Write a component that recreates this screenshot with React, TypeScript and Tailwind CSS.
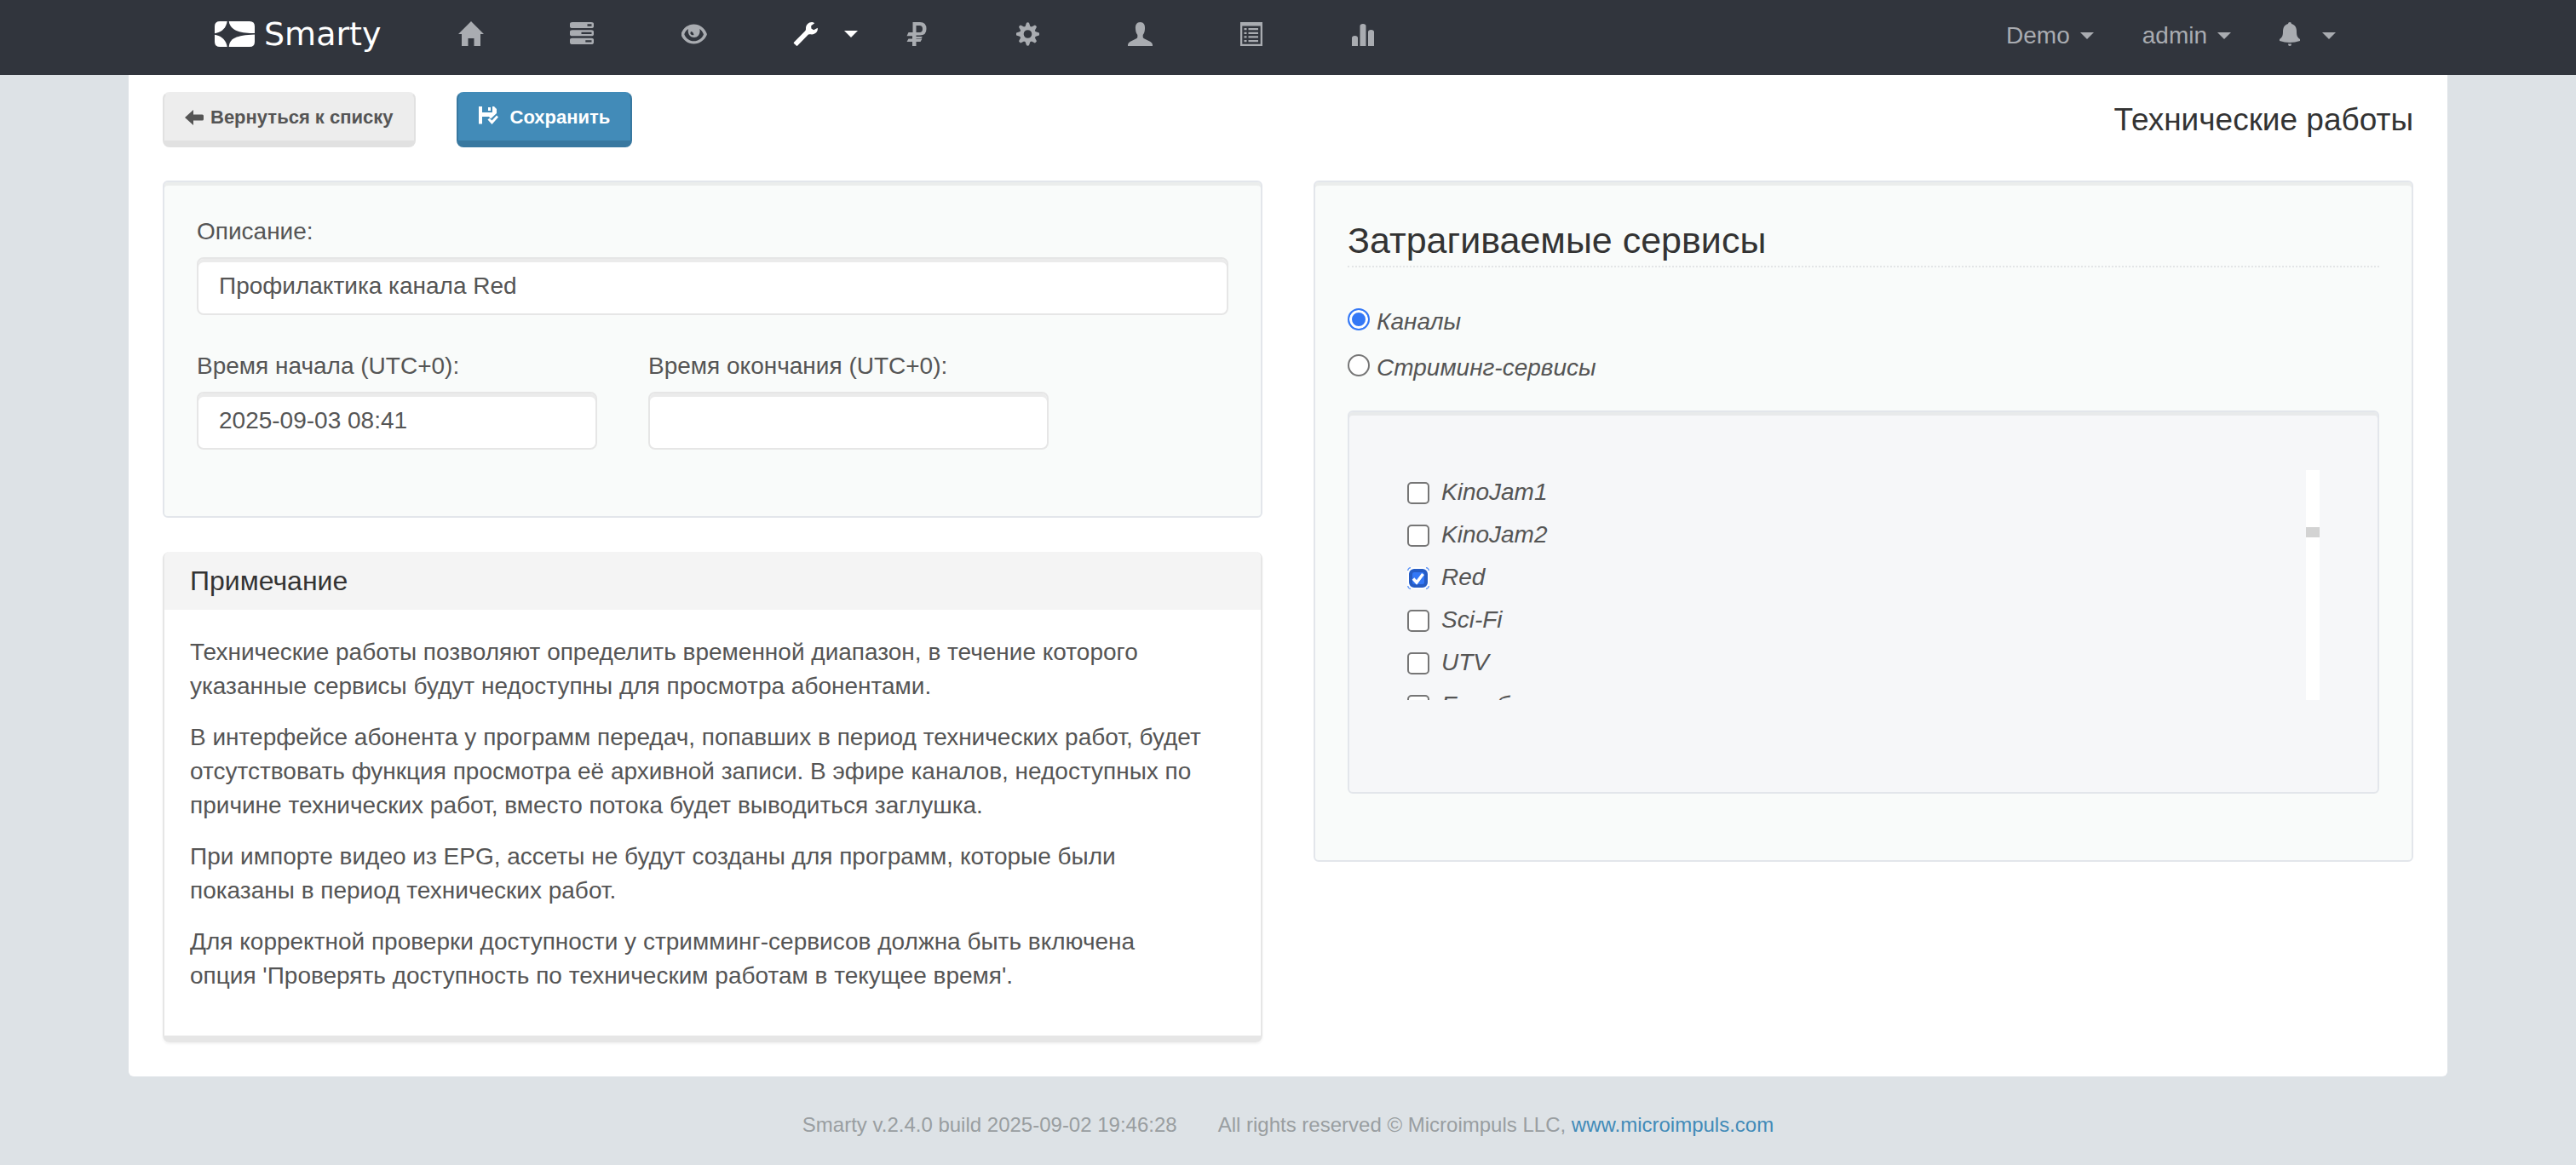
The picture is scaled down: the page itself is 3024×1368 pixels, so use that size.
import { useState, type ReactNode } from "react";

const channels = ["KinoJam1", "KinoJam2", "Red", "Sci-Fi", "UTV", "Евробокс"];

const notes = [
  "Технические работы позволяют определить временной диапазон, в течение которого указанные сервисы будут недоступны для просмотра абонентами.",
  "В интерфейсе абонента у программ передач, попавших в период технических работ, будет отсутствовать функция просмотра её архивной записи. В эфире каналов, недоступных по причине технических работ, вместо потока будет выводиться заглушка.",
  "При импорте видео из EPG, ассеты не будут созданы для программ, которые были показаны в период технических работ.",
  "Для корректной проверки доступности у стримминг-сервисов должна быть включена опция 'Проверять доступность по техническим работам в текущее время'.",
];

function Icon({ children }: { children: ReactNode }) {
  return (
    <svg viewBox="0 0 30 30" className="size-[30px] shrink-0" fill="currentColor" aria-hidden="true">
      {children}
    </svg>
  );
}

function Caret() {
  return (
    <svg viewBox="0 0 16 8" className="h-2 w-4 shrink-0" fill="currentColor" aria-hidden="true">
      <path d="M0 0H16L8 8Z" />
    </svg>
  );
}

const navItems: { label: string; active?: boolean; icon: ReactNode }[] = [
  { label: "Главная", icon: <path d="M15 0L30 15H26V29H18.500V20H11.500V29H4V15H0Z" /> },
  {
    label: "Серверы",
    icon: (
      <path
        fillRule="evenodd"
        d="M3 1H25Q28 1 28 3V6Q28 8 25 8H3Q0 8 0 6V3Q0 1 3 1ZM20.500 3.300V5.700H25.500V3.300ZM3 10.300H25Q28 10.300 28 12.300V15.300Q28 17.300 25 17.300H3Q0 17.300 0 15.300V12.300Q0 10.300 3 10.300ZM13.500 12.700V15.100H25.500V12.700ZM3 19.700H25Q28 19.700 28 21.700V24.700Q28 27 25 27H3Q0 27 0 24.700V21.700Q0 19.700 3 19.700ZM18.300 22.200V24.600H25.500V22.200Z"
      />
    ),
  },
  {
    label: "Просмотр",
    icon: (
      <>
        <path
          fillRule="evenodd"
          d="M14.500 3.500C21.500 3.500 27 8 29.500 14C30 15 30 15.500 29.500 16.500C27 22 21.500 26.500 14.500 26.500S2 22 -.2 16.500C-.7 15.500-.7 15-.2 14C2 8 7.500 3.500 14.500 3.500ZM8 9C5.500 10.500 4 13 3.300 15.200C5 20 9.500 23.300 14.500 23.300S24.500 20 26 15.200C25 12.800 23.500 10.500 21.300 9C22.500 15 19.500 19 14.800 19S6.800 14.500 8 9Z"
        />
        <path d="M11 12Q13.800 12.200 14.500 16Q11.500 17 10.500 14.500Q10.300 13 11 12Z" fill="#31353d" />
      </>
    ),
  },
  {
    label: "Инструменты",
    active: true,
    icon: (
      <path d="M.7 25.700Q.6 25 1.200 24.500L14 11.500C15 10.500 15 9.500 15 8.500C14.800 4 18.500.7 22.500 1Q24.500 1.200 25.200 2.300L21.200 5.200L21.400 8.400L24.200 10.300L28.800 7.800C29.600 12 26 15.500 22 15.500C20 15.500 18.500 14.800 17 16.500L5.300 28.600Q4.600 29.200 4 28.700Z" />
    ),
  },
  {
    label: "Финансы",
    icon: (
      <path
        fillRule="evenodd"
        d="M9.500 1H18Q25.500 1 25.500 9Q25.500 16.500 18 16.500H13.500V18H21L19 20.500V20H13.500V20.500H20.500L18.500 24H13.500V29H9V24H2.500L4.500 20.500H9V17.200H2.500L4.500 13H9.500ZM13.500 5V13H17.500Q21 13 21 9Q21 5 17.500 5Z"
      />
    ),
  },
  {
    label: "Настройки",
    icon: (
      <>
        <path
          fillRule="evenodd"
          d="M13.500 5.500A9.500 9.500 0 1 0 13.500 24.500A9.500 9.500 0 1 0 13.500 5.500ZM13.500 10.200A4.800 4.800 0 1 1 13.500 19.800A4.800 4.800 0 1 1 13.500 10.200Z"
        />
        {[0, 45, 90, 135, 180, 225, 270, 315].map((a) => (
          <path key={a} d="M10.300 7L12 1.700Q13.500 1 15 1.700L16.700 7Z" transform={`rotate(${a} 13.5 15)`} />
        ))}
      </>
    ),
  },
  {
    label: "Абоненты",
    icon: (
      <path d="M14.500 1C18.500 1 20.500 4 20 9C19.800 12 19.200 14 17.700 16V18.500Q17.700 19.500 19 20.200L26.500 24Q29 25.500 29 27.500V29H0V27.500Q0 25.500 2.500 24L10 20.200Q11.300 19.500 11.300 18.500V16C9.800 14 9.200 12 9 9C8.500 4 10.500 1 14.500 1Z" />
    ),
  },
  {
    label: "Отчёты",
    icon: (
      <path
        fillRule="evenodd"
        d="M1 1H27V29H1ZM3.300 5.500V26.700H24.700V5.500ZM5.500 8H8.500V10.200H5.500ZM10.500 8H22V10.200H10.500ZM5.500 12.700H8.500V14.900H5.500ZM10.500 12.700H22V14.900H10.500ZM5.500 17.300H8.500V19.500H5.500ZM10.500 17.300H22V19.500H10.500ZM5.500 22H8.500V24.200H5.500ZM10.500 22H22V24.200H10.500Z"
      />
    ),
  },
  {
    label: "Статистика",
    icon: (
      <path d="M1 29V19.500Q1 17 4.500 17T8 19.500V29ZM10.500 29V5.500Q10.500 3 14 3T17.500 5.500V29ZM20 29V12.500Q20 10 23.500 10T27 12.500V29Z" />
    ),
  },
];

function TextField({ id, label, value, className }: { id: string; label: string; value: string; className: string }) {
  return (
    <div className={className}>
      <label htmlFor={id} className="mb-2.5 block">
        {label}
      </label>
      <input
        id={id}
        type="text"
        defaultValue={value}
        className="block h-[68px] w-full rounded-lg border-2 border-[#e6e6e6] bg-white px-6 shadow-[inset_0_4px_0_#ebebeb] outline-none"
      />
    </div>
  );
}

function Radio({ label, checked, onChange }: { label: string; checked: boolean; onChange: () => void }) {
  return (
    <label className="flex items-start gap-2 italic">
      <input
        type="radio"
        name="service-type"
        checked={checked}
        onChange={onChange}
        className="mt-1 size-[26px] appearance-none rounded-full border-2 border-[#767676] bg-white checked:border-[#3478f6] checked:bg-[#3478f6] checked:shadow-[inset_0_0_0_3px_#fff]"
      />
      {label}
    </label>
  );
}

function ChannelCheckbox({ label, defaultChecked }: { label: string; defaultChecked: boolean }) {
  return (
    <label className="relative flex items-start gap-3.5 italic">
      <input
        type="checkbox"
        defaultChecked={defaultChecked}
        className="peer mt-2 size-[26px] appearance-none rounded-[5px] border-2 border-[#767676] bg-white checked:rounded-lg checked:border-white checked:bg-[#3478f6] checked:shadow-[inset_0_0_0_4px_#265cc4]"
      />
      <svg
        viewBox="0 0 26 26"
        className="pointer-events-none absolute top-2 left-0 hidden size-[26px] peer-checked:block"
        fill="none"
        aria-hidden="true"
      >
        <path d="M7 13.500L11 18L18.500 8" stroke="#fff" strokeWidth="3.500" />
        <path
          d="M.7 4Q1 1 4 .7M22 .7Q25 1 25.300 4M25.300 22Q25 25 22 25.300M4 25.300Q1 25 .7 22"
          stroke="#5b93f7"
          strokeWidth="1.200"
        />
      </svg>
      {label}
    </label>
  );
}

const panel = "rounded-md border-2 border-[#e3e6eb] bg-[#f9fbfa] px-[38px] pt-[38px] pb-[78px] shadow-[inset_0_4px_0_#ebedec]";

export default function App() {
  const [type, setType] = useState("channels");

  return (
    <div className="min-h-screen bg-[#dde2e6] font-['Liberation_Sans',Arial,sans-serif] text-[28px] leading-10 text-[#555]">
      <header className="flex h-[88px] items-center justify-between bg-[#31353d] pr-[282px] pb-2 pl-[252px] text-[#a9acb1]">
        <div className="flex items-center">
          <a href="#" className="flex w-[286px] items-center gap-[11px] text-white">
            <svg viewBox="0 0 47 30" className="h-[30px] w-[47px]" fill="currentColor" aria-hidden="true">
              <path d="M6 0H14.700C13.500 8 8 13 0 14.200V6Q0 0 6 0Z" />
              <path d="M16.700 0H41Q47 0 47 6V14C32 14 18.500 12 16.700 0Z" />
              <path d="M47 15.500V24Q47 30 41 30H16.700C17.500 20 25 16.500 47 15.500Z" />
              <path d="M0 15.800C8 17 13.500 22 14.700 30H6Q0 30 0 24Z" />
            </svg>
            <span className="font-['DejaVu_Sans',sans-serif] text-[38px]">Smarty</span>
          </a>
          <nav className="flex">
            {navItems.map((item) => (
              <a
                key={item.label}
                href="#"
                aria-label={item.label}
                className={item.active ? "flex w-[131px] items-center gap-[30px] text-white" : "flex w-[131px] items-center"}
              >
                <Icon>{item.icon}</Icon>
                {item.active && <Caret />}
              </a>
            ))}
          </nav>
        </div>
        <div className="flex items-center gap-[57px] pt-1">
          <button type="button" className="flex items-center gap-3">
            Demo
            <Caret />
          </button>
          <button type="button" className="flex items-center gap-3">
            admin
            <Caret />
          </button>
          <button type="button" aria-label="Уведомления" className="flex items-center gap-[26px]">
            <svg viewBox="0 0 24 32" className="h-8 w-6" fill="currentColor" aria-hidden="true">
              <path d="M12 0Q14 0 14 2C18 3 20 6 20 11C20 16 21 18 24 20V22Q18 24 12 24T0 22V20C3 18 4 16 4 11C4 6 6 3 10 2Q10 0 12 0ZM10 25.500H14Q14 28 12 28T10 25.500Z" />
            </svg>
            <Caret />
          </button>
        </div>
      </header>

      <main className="mx-[151px] rounded-b-md bg-white px-10 pt-5 pb-10">
        <div className="mb-[39px] flex items-center justify-between">
          <div className="flex gap-12 text-[22px] font-bold">
            <button
              type="button"
              className="flex h-[65px] items-center gap-2 rounded-lg border-2 border-b-8 border-[#e1e1e1] border-t-[#ededed] bg-[#ededed] px-6"
            >
              <svg viewBox="0 0 22 18" className="h-[18px] w-[22px]" fill="currentColor" aria-hidden="true">
                <path d="M0 9L10 0V5.500H20.500Q22 5.500 22 7V11Q22 12.500 20.500 12.500H10V18Z" />
              </svg>
              Вернуться к списку
            </button>
            <button
              type="button"
              className="flex h-[65px] items-center gap-3.5 rounded-lg border-2 border-b-8 border-[#3878a0] border-t-[#428bb8] bg-[#428bb8] px-6 text-white"
            >
              <svg viewBox="0 0 23 26" className="h-[26px] w-[23px]" fill="currentColor" aria-hidden="true">
                <path
                  fillRule="evenodd"
                  d="M0 0H4V7H16V0H18L21 3V8L14 14.500L12 12H4V20.500H0ZM11 1H14V5H11Z"
                />
                <path d="M10.500 15.500L12.500 13.800L15.500 16.500L21 10.500L23 12.500L15.500 21Z" />
              </svg>
              Сохранить
            </button>
          </div>
          <h1 className="text-[37px] text-[#333]">Технические работы</h1>
        </div>

        <div className="grid grid-cols-2 items-start gap-[60px]">
          <div className="flex flex-col gap-10">
            <section className={panel}>
              <TextField id="description" label="Описание:" value="Профилактика канала Red" className="mb-10" />
              <div className="flex gap-[60px]">
                <TextField id="start" label="Время начала (UTC+0):" value="2025-09-03 08:41" className="w-[470px]" />
                <TextField id="end" label="Время окончания (UTC+0):" value="" className="w-[470px]" />
              </div>
            </section>

            <section className="rounded-lg border-x-2 border-b-8 border-[#e6e6e6] shadow-[0_2px_3px_#0000000d]">
              <h2 className="rounded-t-md bg-[#f4f4f4] px-[30px] py-3 text-[32px] leading-[44px] text-[#333]">
                Примечание
              </h2>
              <div className="flex flex-col gap-5 pt-[30px] pr-16 pb-[50px] pl-[30px]">
                {notes.map((note) => (
                  <p key={note}>{note}</p>
                ))}
              </div>
            </section>
          </div>

          <section className={panel}>
            <h2 className="mb-11 border-b-2 border-dotted border-[#e3e5e6] text-[43px] leading-[60px] text-[#333]">
              Затрагиваемые сервисы
            </h2>
            <div className="mb-[30px] flex flex-col gap-3.5">
              <Radio label="Каналы" checked={type === "channels"} onChange={() => setType("channels")} />
              <Radio label="Стриминг-сервисы" checked={type === "streaming"} onChange={() => setType("streaming")} />
            </div>
            <div className="flex justify-between rounded-md border-2 border-[#e3e6eb] bg-[#f6f7f9] px-[68px] pt-[68px] pb-[108px] shadow-[inset_0_4px_0_#e8eaeb]">
              <div className="flex h-[270px] flex-1 flex-col gap-2.5 overflow-hidden pt-1.5">
                {channels.map((name) => (
                  <ChannelCheckbox key={name} label={name} defaultChecked={name === "Red"} />
                ))}
              </div>
              <div className="w-4 bg-white pt-[67px]">
                <div className="h-3 bg-[#d3d3d3]" />
              </div>
            </div>
          </section>
        </div>
      </main>

      <footer className="flex justify-center gap-12 pt-10 pb-7 text-[24px] leading-[34px] text-[#999ea1]">
        <span>Smarty v.2.4.0 build 2025-09-02 19:46:28</span>
        <span>
          All rights reserved © Microimpuls LLC,{" "}
          <a href="#" className="text-[#428bb8]">
            www.microimpuls.com
          </a>
        </span>
      </footer>
    </div>
  );
}
